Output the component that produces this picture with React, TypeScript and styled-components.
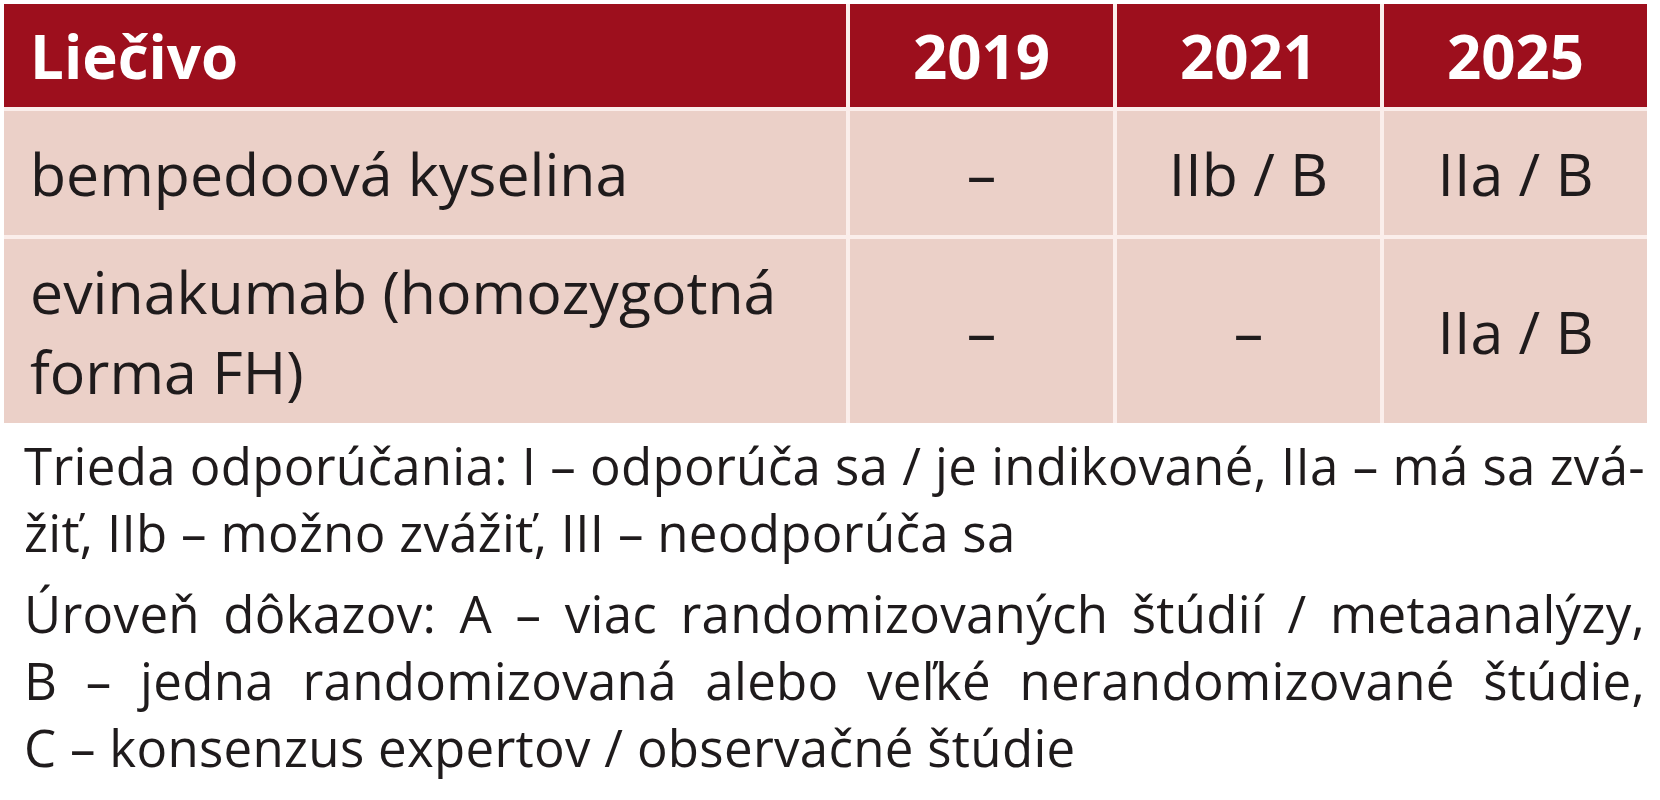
import styled, { createGlobalStyle } from "styled-components"

const GlobalStyle = createGlobalStyle`
  body {
    margin: 0;
    background: #ffffff;
    font-family: "Open Sans", "Liberation Sans", sans-serif;
    color: #1f1b1c;
  }
`

const Page = styled.div`
  width: 1660px;
  height: 800px;
  box-sizing: border-box;
  padding: 4px 13px 0 4px;
  overflow: hidden;
`

const Table = styled.div`
  display: grid;
  grid-template-columns: 842px repeat(3, 1fr);
  grid-template-rows: 103px 124px 184px;
  gap: 4px;
  background: #fbeeeb;
`

const HeadCell = styled.div<{ $center?: boolean }>`
  display: flex;
  align-items: center;
  justify-content: ${(p) => (p.$center ? "center" : "flex-start")};
  padding: 0 26px;
  background: #9d0f1d;
  color: #ffffff;
  font-size: 60px;
  font-weight: 700;
  line-height: 1.2;
`

const Cell = styled.div<{ $center?: boolean }>`
  display: flex;
  flex-direction: column;
  justify-content: center;
  align-items: ${(p) => (p.$center ? "center" : "flex-start")};
  padding: 0 26px;
  background: #ebd0c8;
  font-size: 59px;
  line-height: 80px;
`

const Notes = styled.div`
  padding: 9px 2px 0 20px;
  font-size: 51px;
  line-height: 67px;
  letter-spacing: 0.3px;
`

const Paragraph = styled.div`
  & + & {
    margin-top: 14px;
  }
`

const Line = styled.div<{ $justify?: boolean }>`
  white-space: nowrap;
  text-align: ${(p) => (p.$justify ? "justify" : "left")};
  text-align-last: ${(p) => (p.$justify ? "justify" : "left")};
`

const years = ["2019", "2021", "2025"]

const rows = [
  { drug: ["bempedoová kyselina"], values: ["–", "IIb / B", "IIa / B"] },
  { drug: ["evinakumab (homozygotná", "forma FH)"], values: ["–", "–", "IIa / B"] },
]

const notes = [
  [
    { text: "Trieda odporúčania: I – odporúča sa / je indikované, IIa – má sa zvá-", justify: true },
    { text: "žiť, IIb – možno zvážiť, III – neodporúča sa", justify: false },
  ],
  [
    { text: "Úroveň dôkazov: A – viac randomizovaných štúdií / metaanalýzy,", justify: true },
    { text: "B – jedna randomizovaná alebo veľké nerandomizované štúdie,", justify: true },
    { text: "C – konsenzus expertov / observačné štúdie", justify: false },
  ],
]

function App() {
  return (
    <Page>
      <GlobalStyle />
      <Table>
        <HeadCell>Liečivo</HeadCell>
        {years.map((y) => (
          <HeadCell key={y} $center>
            {y}
          </HeadCell>
        ))}
        {rows.map((row, i) => [
          <Cell key={"d" + i}>
            {row.drug.map((l) => (
              <span key={l}>{l}</span>
            ))}
          </Cell>,
          ...row.values.map((v, j) => (
            <Cell key={i + "-" + j} $center>
              {v}
            </Cell>
          )),
        ])}
      </Table>
      <Notes>
        {notes.map((p, i) => (
          <Paragraph key={i}>
            {p.map((l) => (
              <Line key={l.text} $justify={l.justify}>
                {l.text}
              </Line>
            ))}
          </Paragraph>
        ))}
      </Notes>
    </Page>
  )
}

export default App
